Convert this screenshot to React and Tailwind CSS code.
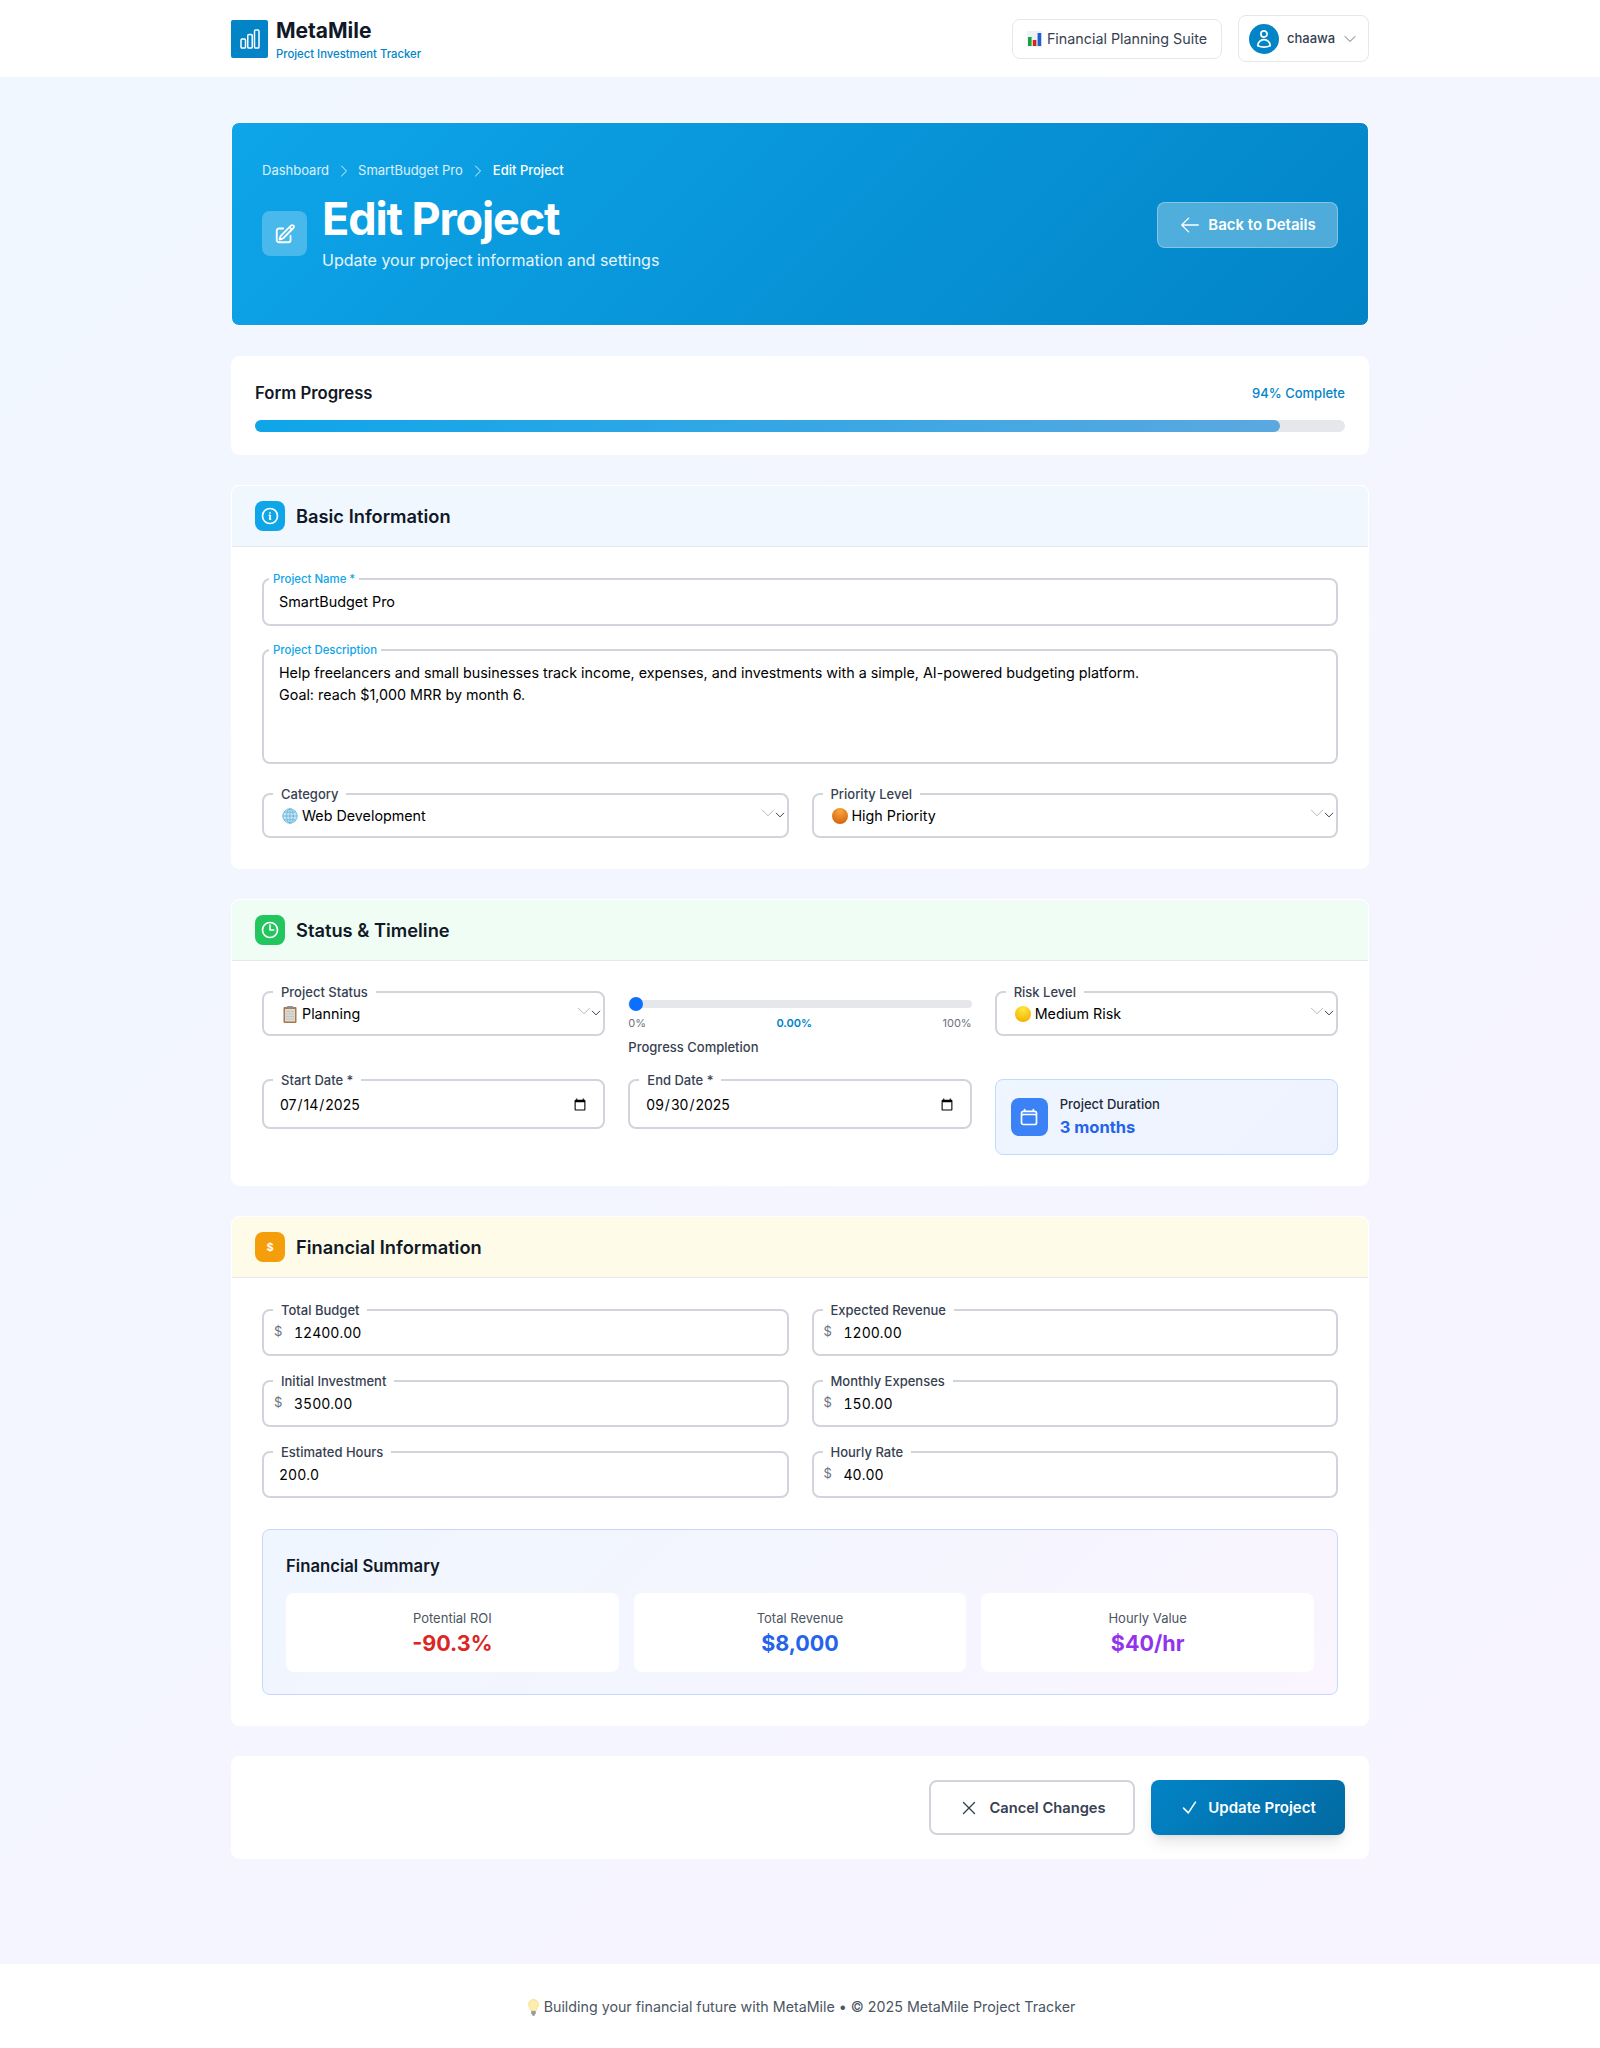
import {
  HiOutlineArrowLeft,
  HiOutlineChartBar,
  HiOutlineCalendar,
  HiOutlineCheck,
  HiOutlineChevronDown,
  HiOutlineChevronRight,
  HiOutlineClock,
  HiOutlineInformationCircle,
  HiOutlinePencilSquare,
  HiOutlineUser,
  HiOutlineXMark,
} from "react-icons/hi2";

const ChartEmoji = () => (
  <svg width="15" height="16" viewBox="0 0 15 16">
    <rect x="0" y="0" width="15" height="16" fill="#eef1f5" />
    <rect x="1" y="6" width="3.6" height="9" fill="#17a33a" />
    <rect x="5.8" y="9" width="3.6" height="6" fill="#d8261c" />
    <rect x="10.6" y="2" width="3.6" height="13" fill="#1f5fd0" />
  </svg>
);

const GlobeEmoji = () => (
  <svg width="16" height="16" viewBox="0 0 16 16" fill="none">
    <circle cx="8" cy="8" r="7.5" fill="#c4e3f3" />
    <g stroke="#5aaed8" strokeWidth="0.7">
      <circle cx="8" cy="8" r="7.2" />
      <ellipse cx="8" cy="8" rx="3.4" ry="7.2" />
      <path d="M8 .8v14.4M.8 8h14.4M2 4.2h12M2 11.8h12" />
    </g>
  </svg>
);

const BallEmoji = ({ id, light, dark }) => (
  <svg width="16" height="16" viewBox="0 0 16 16">
    <defs>
      <radialGradient id={id} cx="50%" cy="20%" r="85%">
        <stop offset="0%" stopColor={light} />
        <stop offset="100%" stopColor={dark} />
      </radialGradient>
    </defs>
    <circle cx="8" cy="8" r="8" fill={`url(#${id})`} />
  </svg>
);

const ClipboardEmoji = () => (
  <svg width="16" height="17" viewBox="0 0 16 17">
    <rect x="1.5" y="1" width="13" height="16" rx="1" fill="#a9794a" />
    <rect x="3" y="3" width="10" height="12.5" fill="#d9d9d6" />
    <path d="M4 5.5h8M4 8h8M4 10.5h8M4 13h8" stroke="#bcbcb8" strokeWidth="0.7" />
    <rect x="5" y="0" width="6" height="2.5" rx="0.6" fill="#8f8f8f" />
  </svg>
);

const BulbEmoji = () => (
  <svg width="11" height="17" viewBox="0 0 11 17">
    <path d="M5.5.6a5 5 0 0 0-5 5c0 2.4 1.8 3.4 2.3 6h5.4c.5-2.6 2.3-3.6 2.3-6a5 5 0 0 0-5-5z" fill="#fdeeb0" stroke="#f5d878" strokeWidth="0.7" />
    <rect x="3.2" y="12" width="4.6" height="3.2" rx="0.6" fill="#9a9a9a" />
    <rect x="4.2" y="15.2" width="2.6" height="1.4" rx="0.6" fill="#6b6b6b" />
  </svg>
);

const Outlined = ({ label, accent, className = "", children }) => (
  <fieldset className={`border-2 border-[#d1d5db] rounded-lg p-0 min-w-0 ${className}`}>
    {accent ? (
      <legend className="ml-[5px] px-[4px] text-[11.4px] leading-4 font-medium text-[#0ea5e9]">{label}</legend>
    ) : (
      <legend className="ml-[9px] px-[8px] text-[13px] leading-4 font-medium text-[#374151]">{label}</legend>
    )}
    {children}
  </fieldset>
);

const SelectField = ({ label, icon, value }) => (
  <Outlined label={label}>
    <div className="relative flex items-start h-[34px] pl-[18px] text-[14.3px] text-black">
      <span className="flex items-center h-[28px] gap-[4px]">
        {icon}
        {value}
      </span>
      <HiOutlineChevronDown className="absolute right-[10px] top-[2px] w-[18px] h-[18px] text-[#9ca3af] stroke-1" />
      <HiOutlineChevronDown className="absolute right-[1px] top-[7px] w-[12px] h-[12px] text-[#374151] stroke-2" />
    </div>
  </Outlined>
);

const MoneyField = ({ label, value, money = true }) => (
  <Outlined label={label}>
    <div className="flex items-start h-[36px] text-sm tabular-nums text-black">
      {money ? (
        <>
          <span className="ml-[10px] w-[20px] leading-[26px] text-[13px] text-[#6b7280]">$</span>
          <span className="leading-[30px]">{value}</span>
        </>
      ) : (
        <span className="ml-[15px] leading-[30px]">{value}</span>
      )}
    </div>
  </Outlined>
);

const DateField = ({ label, value }) => (
  <Outlined label={label} className="self-start">
    <div className="h-[39px] pl-[15px] pr-[14px] pb-[6px]">
      <input type="date" defaultValue={value} className="w-full h-[33px] text-sm text-black bg-transparent outline-none" />
    </div>
  </Outlined>
);

const SectionHeader = ({ title, iconBg, bg, children }) => (
  <div className={`flex items-center gap-3 h-[61px] px-[23px] border-b border-[#e5e7eb] rounded-t-lg ${bg}`}>
    <div className={`flex items-center justify-center w-[30px] h-[30px] rounded-lg text-white ${iconBg}`}>{children}</div>
    <h2 className="text-[18.3px] -ml-px mt-[2px] font-semibold text-[#111827]">{title}</h2>
  </div>
);

const SummaryCard = ({ label, value, color }) => (
  <div className="bg-white rounded-lg h-[79px] pt-4 text-center">
    <div className="text-[13px] leading-[18px] text-[#4b5563]">{label}</div>
    <div className={`mt-px text-[21.5px] leading-[30px] font-bold ${color}`}>{value}</div>
  </div>
);

export default function App() {
  return (
    <div className="min-h-screen font-['Inter',sans-serif] bg-[linear-gradient(135deg,#f0f7ff,#f8f4ff)]">
      {/* Top bar */}
      <header className="bg-white h-[77px]">
        <div className="w-[1138px] mx-auto h-full flex items-center justify-between">
          <div className="flex items-center gap-2">
            <div className="flex items-center justify-center w-[37px] h-[38px] rounded-[2px] bg-[#0284c7] text-white">
              <HiOutlineChartBar className="w-6 h-6" />
            </div>
            <div>
              <div className="text-[21px] leading-[30px] pt-px font-bold text-[#111827]">MetaMile</div>
              <div className="text-[11.3px] leading-4 font-medium text-[#0284c7]">Project Investment Tracker</div>
            </div>
          </div>
          <div className="flex items-center gap-4">
            <div className="flex items-center justify-center gap-[5px] w-[210px] h-10 bg-white border border-[#e5e7eb] rounded-lg text-[14.3px] text-[#374151]">
              <ChartEmoji />
              Financial Planning Suite
            </div>
            <div className="flex items-center w-[131px] h-[47px] pl-[10px] bg-white border border-[#e5e7eb] rounded-lg">
              <div className="flex items-center justify-center w-[30px] h-[30px] rounded-full bg-[#0284c7] text-white">
                <HiOutlineUser className="w-5 h-5 stroke-2" />
              </div>
              <span className="ml-2 text-[13px] font-medium text-[#374151]">chaawa</span>
              <HiOutlineChevronDown className="ml-[7px] w-4 h-4 text-[#6b7280]" />
            </div>
          </div>
        </div>
      </header>

      <main className="w-[1138px] mx-auto pt-[45px] pb-[105px] flex flex-col gap-[30px]">
        {/* Hero */}
        <section className="flex items-center justify-between px-[30px] pt-[37px] pb-9 rounded-lg border border-white bg-[linear-gradient(135deg,#0ea5e9,#0284c7)]">
          <div className="pb-[17px]">
            <nav className="flex items-center h-5 mt-px text-[13px] text-white/85">
              <span>Dashboard</span>
              <HiOutlineChevronRight className="mx-[6.5px] w-4 h-4" />
              <span>SmartBudget Pro</span>
              <HiOutlineChevronRight className="mx-[7px] w-4 h-4" />
              <span className="font-medium text-white">Edit Project</span>
            </nav>
            <div className="flex items-center gap-[15px] mt-[14px]">
              <div className="flex items-center justify-center w-[45px] h-[45px] rounded-lg bg-white/25 text-white">
                <HiOutlinePencilSquare className="w-[22px] h-[22px] stroke-2" />
              </div>
              <div>
                <h1 className="text-[45px] leading-[48px] font-bold tracking-tight text-white">Edit Project</h1>
                <p className="mt-[5px] text-base leading-6 text-white/90">Update your project information and settings</p>
              </div>
            </div>
          </div>
          <button className="flex items-center justify-center gap-[7px] w-[181px] h-[46px] rounded-lg bg-white/30 border border-white/30 text-[15px] font-semibold text-white">
            <HiOutlineArrowLeft className="w-[22px] h-[22px]" />
            <span className="mt-px">Back to Details</span>
          </button>
        </section>

        {/* Form progress */}
        <section className="bg-white rounded-lg border border-white px-[23px] pt-[25px] pb-[22px]">
          <div className="flex items-center justify-between h-6">
            <h3 className="text-[16.7px] font-semibold text-[#111827]">Form Progress</h3>
            <span className="text-[13px] font-medium text-[#0284c7]">94% Complete</span>
          </div>
          <div className="mt-[14px] h-[12px] rounded-full bg-[#e5e7eb]">
            <div className="h-full w-[94%] rounded-full bg-[linear-gradient(90deg,#0ea5e9,#5ba8df)]" />
          </div>
        </section>

        {/* Basic information */}
        <section className="bg-white rounded-lg border border-white">
          <SectionHeader title="Basic Information" bg="bg-[#f0f7ff]" iconBg="bg-[#0ea5e9]">
            <HiOutlineInformationCircle className="w-5 h-5 stroke-2" />
          </SectionHeader>
          <div className="px-[30px] pt-6 pb-[30px]">
            <Outlined label="Project Name *" accent>
              <div className="h-[37px] pl-[15px] text-[14.4px] leading-[30px] text-black">SmartBudget Pro</div>
            </Outlined>
            <Outlined label="Project Description" accent className="mt-[16px]">
              <div className="h-[104px] pl-[15px] pt-[4px] text-[14.3px] leading-[22px] text-black">
                <div>Help freelancers and small businesses track income, expenses, and investments with a simple, AI-powered budgeting platform.</div>
                <div>Goal: reach $1,000 MRR by month 6.</div>
              </div>
            </Outlined>
            <div className="grid grid-cols-2 gap-x-[23px] mt-[22px]">
              <SelectField label="Category" icon={<GlobeEmoji />} value="Web Development" />
              <SelectField label="Priority Level" icon={<BallEmoji id="orangeBall" light="#f9a63c" dark="#d2610a" />} value="High Priority" />
            </div>
          </div>
        </section>

        {/* Status and timeline */}
        <section className="bg-white rounded-lg border border-white">
          <SectionHeader title="Status & Timeline" bg="bg-[#f0fdf4]" iconBg="bg-[#22c55e]">
            <HiOutlineClock className="w-5 h-5 stroke-2" />
          </SectionHeader>
          <div className="px-[30px] pt-[23px] pb-[30px] grid grid-cols-3 gap-x-[23px] gap-y-[15px]">
            <div>
              <SelectField label="Project Status" icon={<ClipboardEmoji />} value="Planning" />
            </div>
            <div className="pt-4">
              <div className="relative h-2 rounded-full bg-[#e5e7eb]">
                <div className="absolute left-px top-[-3px] w-[14px] h-[14px] rounded-full bg-[#0b6fff]" />
              </div>
              <div className="flex justify-between mt-[7px] text-[11px] leading-4 text-[#6b7280]">
                <span>0%</span>
                <span className="font-semibold text-[#0284c7]">0.00%</span>
                <span>100%</span>
              </div>
              <div className="mt-[6px] text-[13px] leading-5 font-medium text-[#374151]">Progress Completion</div>
            </div>
            <div>
              <SelectField label="Risk Level" icon={<BallEmoji id="yellowBall" light="#ffe83f" dark="#f2ae00" />} value="Medium Risk" />
            </div>
            <DateField label="Start Date *" value="2025-07-14" />
            <DateField label="End Date *" value="2025-09-30" />
            <div className="mt-[7px] flex items-center gap-3 h-[76px] px-[15px] rounded-lg border border-[#bfdbfe] bg-[linear-gradient(135deg,#eff6ff,#eef2ff)]">
              <div className="flex items-center justify-center w-[37px] h-[38px] rounded-lg bg-[#3b82f6] text-white">
                <HiOutlineCalendar className="w-5 h-5 stroke-2" />
              </div>
              <div>
                <div className="text-[13px] leading-[18px] font-medium text-[#1f2937]">Project Duration</div>
                <div className="mt-[2px] text-[16.5px] leading-6 font-bold text-[#2563eb]">3 months</div>
              </div>
            </div>
          </div>
        </section>

        {/* Financial information */}
        <section className="bg-white rounded-lg border border-white">
          <SectionHeader title="Financial Information" bg="bg-[#fefce8]" iconBg="bg-[#f59e0b]">
            <span className="text-[11px] font-bold">$</span>
          </SectionHeader>
          <div className="px-[30px] pt-6 pb-[30px]">
            <div className="grid grid-cols-2 gap-x-[23px] gap-y-[17px]">
              <MoneyField label="Total Budget" value="12400.00" />
              <MoneyField label="Expected Revenue" value="1200.00" />
              <MoneyField label="Initial Investment" value="3500.00" />
              <MoneyField label="Monthly Expenses" value="150.00" />
              <MoneyField label="Estimated Hours" value="200.0" money={false} />
              <MoneyField label="Hourly Rate" value="40.00" />
            </div>
            <div className="mt-[31px] rounded-lg border border-[#c7d7fe] px-[23px] pt-6 pb-[22px] bg-[linear-gradient(135deg,#eff6ff,#faf5ff)]">
              <h3 className="text-[16.7px] leading-6 font-semibold text-[#111827]">Financial Summary</h3>
              <div className="grid grid-cols-3 gap-[15px] mt-[15px]">
                <SummaryCard label="Potential ROI" value="-90.3%" color="text-[#dc2626]" />
                <SummaryCard label="Total Revenue" value="$8,000" color="text-[#2563eb]" />
                <SummaryCard label="Hourly Value" value="$40/hr" color="text-[#9333ea]" />
              </div>
            </div>
          </div>
        </section>

        {/* Actions */}
        <section className="flex justify-end gap-4 bg-white rounded-lg border border-white p-[23px]">
          <button className="flex items-center justify-center gap-[9px] w-[206px] h-[55px] rounded-lg border-2 border-[#d1d5db] bg-white text-[14.7px] font-semibold text-[#374151]">
            <HiOutlineXMark className="w-[22px] h-[22px]" />
            <span className="mt-[2px]">Cancel Changes</span>
          </button>
          <button className="flex items-center justify-center gap-[9px] w-[194px] h-[55px] rounded-lg text-[15px] font-semibold text-white shadow-lg bg-[linear-gradient(135deg,#0284c7,#0369a1)]">
            <HiOutlineCheck className="w-[19px] h-[19px] stroke-2" />
            <span className="mt-[2px]">Update Project</span>
          </button>
        </section>
      </main>

      <footer className="flex items-center justify-center gap-[5px] h-[84px] pt-[2px] pl-[3px] bg-white text-[14.25px] text-[#4b5563]">
        <BulbEmoji />
        Building your financial future with MetaMile • © 2025 MetaMile Project Tracker
      </footer>
    </div>
  );
}
